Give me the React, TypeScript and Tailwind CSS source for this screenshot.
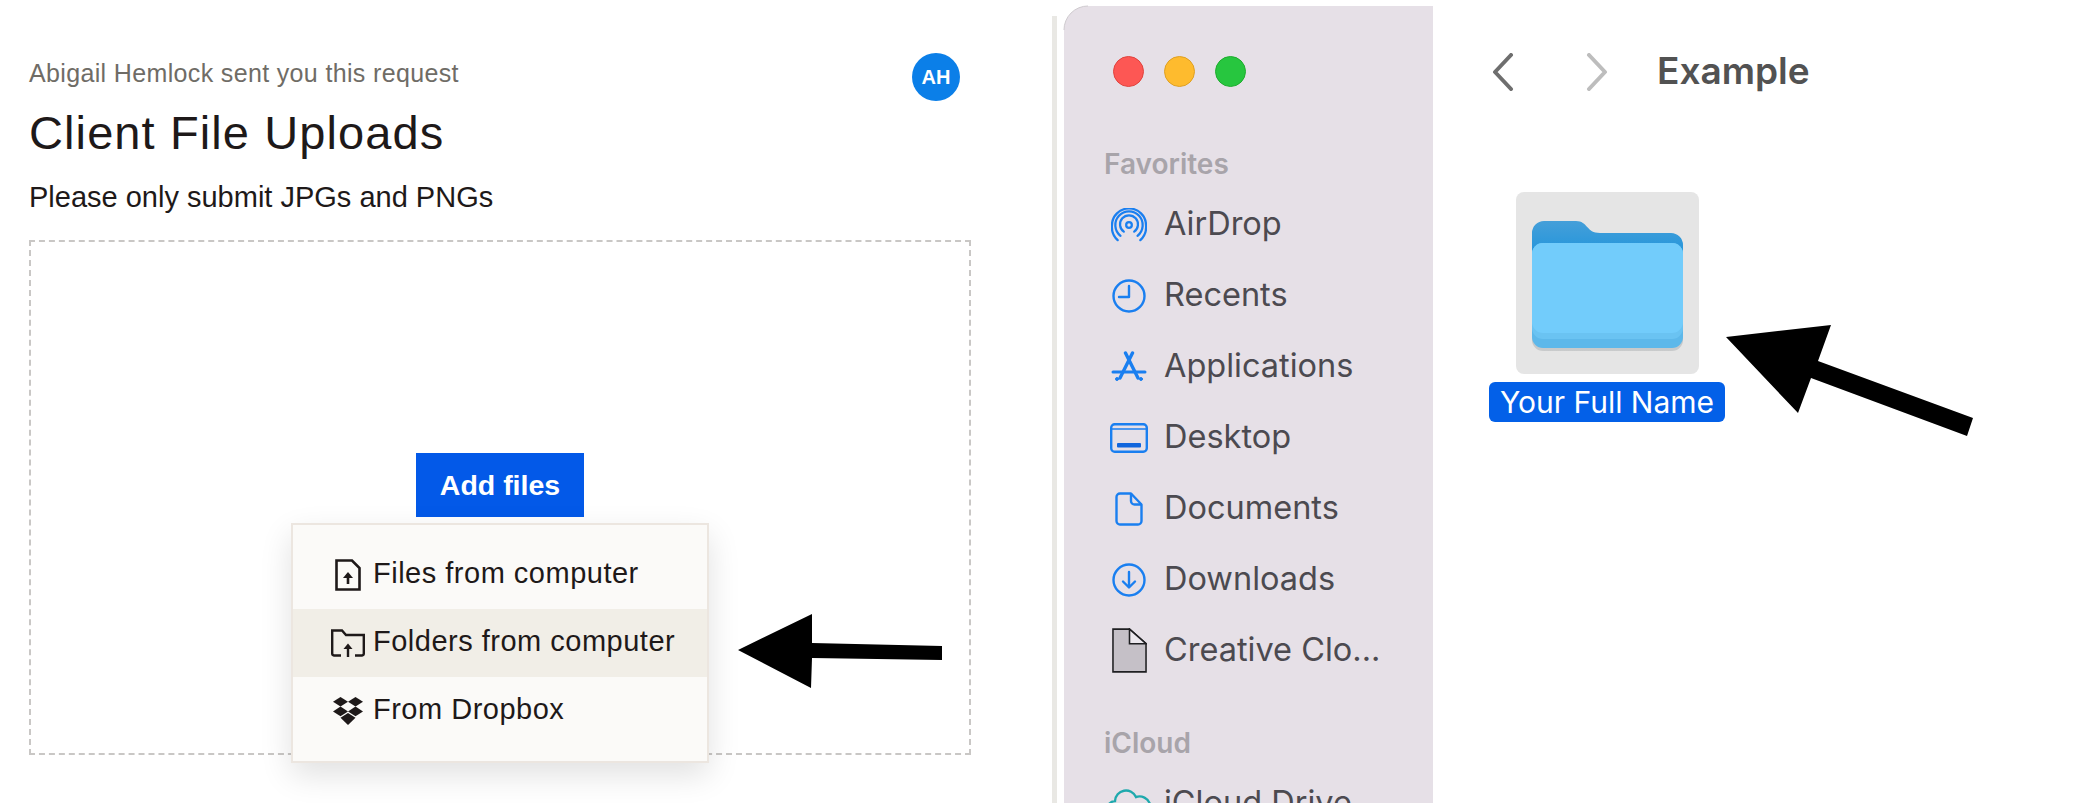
import React from 'react';

const sidebarFont = "font-['Inter',sans-serif]";

const AirDropIcon = () => (
  <svg width="36" height="34" viewBox="0 0 38 36" fill="none" stroke="#1a7ff0" strokeWidth="2.4" strokeLinecap="round">
    <circle cx="19" cy="18" r="3" />
    <path d="M13.5 25 A9.5 9.5 0 1 1 24.5 25" />
    <path d="M10 29.5 A14.5 14.5 0 1 1 28 29.5" />
    <path d="M7 34 A19 19 0 0 1 1 18 A18 17.5 0 0 1 37 18 A19 19 0 0 1 31 34" />
  </svg>
);

const ClockIcon = () => (
  <svg width="34" height="34" viewBox="0 0 34 34" fill="none" stroke="#1a7ff0" strokeWidth="2.4" strokeLinecap="round" strokeLinejoin="round">
    <circle cx="17" cy="17" r="15.5" />
    <path d="M17 7 V18 H7" />
  </svg>
);

const AppsIcon = () => (
  <svg width="36" height="32" viewBox="0 0 36 32" fill="none" stroke="#1a7ff0" strokeLinecap="round">
    <path d="M14.5 2 L27 27" strokeWidth="3.4" />
    <path d="M21.5 2 L9 27" strokeWidth="3.4" />
    <path d="M2 21 H34" strokeWidth="3" />
    <circle cx="6" cy="28" r="1.5" fill="#1a7ff0" />
    <circle cx="30" cy="28" r="1.5" fill="#1a7ff0" />
  </svg>
);

const DesktopIcon = () => (
  <svg width="38" height="30" viewBox="0 0 38 30" fill="none">
    <rect x="1.2" y="1.2" width="35.6" height="27.6" rx="3.5" stroke="#1a7ff0" strokeWidth="2.4" />
    <path d="M1.5 6 H36.5" stroke="#1a7ff0" strokeWidth="1.6" />
    <rect x="7" y="20" width="24" height="4.5" rx="1" fill="#1166dd" />
  </svg>
);

const DocumentIcon = () => (
  <svg width="28" height="34" viewBox="0 0 28 34" fill="none" stroke="#1a7ff0" strokeWidth="2.4" strokeLinejoin="round">
    <path d="M5 1.5 H16 L26.5 12.5 V29 A3.5 3.5 0 0 1 23 32.5 H5 A3.5 3.5 0 0 1 1.5 29 V5 A3.5 3.5 0 0 1 5 1.5 Z" />
    <path d="M16 1.5 V9 A3.5 3.5 0 0 0 19.5 12.5 H26.5" />
  </svg>
);

const DownloadIcon = () => (
  <svg width="34" height="34" viewBox="0 0 34 34" fill="none" stroke="#1a7ff0" strokeWidth="2.4" strokeLinecap="round" strokeLinejoin="round">
    <circle cx="17" cy="17" r="15.5" />
    <path d="M17 9 V24 M11 18.5 L17 24.5 L23 18.5" />
  </svg>
);

const GenericFileIcon = () => (
  <svg width="35" height="45" viewBox="0 0 36 46" stroke="#1f1f22" strokeWidth="1.6">
    <path d="M1 1 H18 L35 16 V45 H1 Z" fill="#c5c0c7" />
    <path d="M18 1 V16 H35 Z" fill="#ece8ee" />
  </svg>
);

const CloudIcon = () => (
  <svg width="46" height="34" viewBox="0 0 46 34" fill="none" stroke="#1fa9ad" strokeWidth="2.4">
    <path d="M10 31 A8.5 8.5 0 0 1 9 14 A11 11 0 0 1 30 10 A10.5 10.5 0 0 1 37 31 Z" />
  </svg>
);

const sidebarItems = [
  { label: 'AirDrop', icon: <AirDropIcon /> },
  { label: 'Recents', icon: <ClockIcon /> },
  { label: 'Applications', icon: <AppsIcon /> },
  { label: 'Desktop', icon: <DesktopIcon /> },
  { label: 'Documents', icon: <DocumentIcon /> },
  { label: 'Downloads', icon: <DownloadIcon /> },
  { label: 'Creative Clo...', icon: <GenericFileIcon /> },
];

const FileUpIcon = () => (
  <svg width="26" height="32" viewBox="0 0 26 32" fill="none">
    <path d="M1.5 1.5 H17 L24.5 9 V30.5 H1.5 Z" stroke="#1e1919" strokeWidth="2.6" />
    <path d="M13 25 V15" stroke="#1e1919" strokeWidth="2.6" />
    <path d="M8 19 L13 13 L18 19 Z" fill="#1e1919" />
  </svg>
);

const FolderUpIcon = () => (
  <svg width="34" height="28" viewBox="0 0 34 28" fill="none" stroke="#1e1919" strokeWidth="2.4">
    <path d="M10 26.5 H3 A2 2 0 0 1 1.2 24.5 V1.5 H11 L15 6 H32.8 V24.5 A2 2 0 0 1 31 26.5 H24" />
    <path d="M17 28 V17" />
    <path d="M12.5 20 L17 14.5 L21.5 20 Z" fill="#1e1919" stroke="none" />
  </svg>
);

const DropboxIcon = () => (
  <svg width="32" height="28" viewBox="0 0 32 28" fill="#1e1919">
    <path d="M8.5 0 L16 4.8 L8.5 9.6 L1 4.8 Z" />
    <path d="M23.5 0 L31 4.8 L23.5 9.6 L16 4.8 Z" />
    <path d="M8.5 9.6 L16 14.4 L8.5 19.2 L1 14.4 Z" />
    <path d="M23.5 9.6 L31 14.4 L23.5 19.2 L16 14.4 Z" />
    <path d="M16 16 L23.5 20.8 L16 28 L8.5 20.8 Z" />
  </svg>
);

const menuItems = [
  { label: 'Files from computer', icon: <FileUpIcon />, active: false },
  { label: 'Folders from computer', icon: <FolderUpIcon />, active: true },
  { label: 'From Dropbox', icon: <DropboxIcon />, active: false },
];

const FolderGraphic = () => (
  <svg width="151" height="130" viewBox="0 0 151 130">
    <defs>
      <linearGradient id="folderBack" x1="0" y1="0" x2="0" y2="1">
        <stop offset="0" stopColor="#459fd9" />
        <stop offset="1" stopColor="#1190dc" />
      </linearGradient>
      <linearGradient id="folderShade" x1="0" y1="0" x2="0" y2="1">
        <stop offset="0" stopColor="#9a9fa3" />
        <stop offset="1" stopColor="#c9cbcc" />
      </linearGradient>
    </defs>
    <path d="M0 12 A12 12 0 0 1 12 0 H44 C56 0 54 12 68 12 H139 A12 12 0 0 1 151 24 V50 H0 Z" fill="url(#folderBack)" />
    <rect x="0" y="30" width="151" height="100" rx="11" fill="url(#folderShade)" />
    <rect x="0" y="22" width="151" height="105" rx="11" fill="#5db8ea" />
    <rect x="0" y="22" width="151" height="96" rx="11" fill="#6ac3f2" />
    <rect x="0" y="22" width="151" height="90" rx="11" fill="#72ccfb" />
  </svg>
);

export default function App() {
  return (
    <div className="flex w-[2079px] h-[803px] overflow-hidden bg-white">
      {/* Upload request */}
      <div className="w-[1052px] shrink-0 pl-[29px] font-['Liberation_Sans',sans-serif]">
        <div className="flex justify-between items-start w-[931px] pt-[53px]">
          <p className="pt-1 text-[25px] leading-8 tracking-[0.35px] text-[#6f6c66]">Abigail Hemlock sent you this request</p>
          <div className="w-12 h-12 rounded-full bg-[#0b7fe8] flex items-center justify-center text-white text-[20px] font-bold">AH</div>
        </div>
        <h1 className="mt-[6px] text-[47px] leading-[52px] tracking-[1.1px] text-[#1e1919]">Client File Uploads</h1>
        <p className="mt-[20px] text-[29px] leading-9 text-[#1e1919]">Please only submit JPGs and PNGs</p>
        <div className="relative mt-[25px] w-[942px] h-[515px] border-2 border-dashed border-[#c9c7c5] flex flex-col items-center pt-[211px]">
          <button className="w-[168px] h-16 bg-[#0359e8] text-white text-[28.5px] font-bold">Add files</button>
          <div className="absolute left-[260px] top-[281px] w-[418px] h-[240px] pt-4 bg-[#fbfaf8] border-2 border-[#ece6e0] shadow-[0_12px_30px_rgba(0,0,0,0.12)]">
            {menuItems.map((item) => (
              <div key={item.label} className={`flex items-center h-[68px] ${item.active ? 'bg-[#f1eee7]' : ''}`}>
                <div className="w-[80px] pl-[29px] flex justify-center shrink-0">{item.icon}</div>
                <span className="-mt-0.5 text-[29px] tracking-[0.5px] text-[#1e1919]">{item.label}</span>
              </div>
            ))}
          </div>
        </div>
      </div>

      <div className="w-[5px] shrink-0 mt-4 bg-[#e9e8e4]" />

      {/* Finder sidebar */}
      <div className={`ml-[7px] w-[369px] shrink-0 mt-[6px] rounded-tl-[24px] bg-[#e6e0e7] overflow-hidden ${sidebarFont}`}>
        <div className="flex gap-5 pl-[49px] pt-[50px]">
          <div className="w-[31px] h-[31px] rounded-full bg-[#fd5754] border border-[#e0443e]" />
          <div className="w-[31px] h-[31px] rounded-full bg-[#febb2e] border border-[#dfa023]" />
          <div className="w-[31px] h-[31px] rounded-full bg-[#27c63f] border border-[#1fad2f]" />
        </div>
        <p className="mt-[61px] pl-10 text-[28px] leading-8 font-semibold text-[#a8a4aa]">Favorites</p>
        <div className="mt-[9px]">
          {sidebarItems.map((item) => (
            <div key={item.label} className="flex items-center h-[71px] pl-10">
              <div className="w-[50px] flex justify-center shrink-0">{item.icon}</div>
              <span className="ml-[10px] text-[32.5px] text-[#4c4a50]">{item.label}</span>
            </div>
          ))}
        </div>
        <p className="mt-[41px] pl-10 text-[28px] leading-8 font-semibold text-[#a8a4aa]">iCloud</p>
        <div className="flex items-center h-[71px] pl-10 mt-[9px]">
          <div className="w-[50px] flex justify-center shrink-0"><CloudIcon /></div>
          <span className="ml-[10px] text-[32.5px] text-[#4c4a50]">iCloud Drive</span>
        </div>
      </div>

      {/* Finder content */}
      <div className={`flex-1 ${sidebarFont}`}>
        <div className="flex items-center pl-[59px] pt-[50px] h-[94px]">
          <svg width="22" height="38" viewBox="0 0 22 38" fill="none" stroke="#6e6e6e" strokeWidth="4" strokeLinecap="round" strokeLinejoin="round">
            <path d="M19 2 L3 19 L19 36" />
          </svg>
          <svg className="ml-[72px]" width="22" height="38" viewBox="0 0 22 38" fill="none" stroke="#bdbdbd" strokeWidth="4" strokeLinecap="round" strokeLinejoin="round">
            <path d="M3 2 L19 19 L3 36" />
          </svg>
          <span className="-mt-0.5 ml-[49px] text-[37px] font-semibold text-[#525252]">Example</span>
        </div>
        <div className="ml-[56px] mt-[98px] w-[236px] flex flex-col items-center">
          <div className="ml-[1px] w-[183px] h-[182px] rounded-lg bg-[#e5e5e5] flex items-start justify-center pt-[29px]">
            <FolderGraphic />
          </div>
          <div className="mt-2 w-[236px] h-10 rounded-md bg-[#0360e8] flex items-center justify-center text-white text-[30px]">Your Full Name</div>
        </div>
      </div>

      {/* Annotation arrows */}
      <svg className="absolute left-0 top-0 pointer-events-none" width="2079" height="803" viewBox="0 0 2079 803" fill="#000">
        <path d="M738 650 L812 614 L812 643 L942 646 L942 660 L812 658 L811 688 Z" />
        <path d="M1726 337 L1831 325 L1818 361 L1973 418 L1967 436 L1811 378 L1798 413 Z" />
        <path d="M1064 30 A24 24 0 0 1 1088 6" fill="none" stroke="#cfcbcf" strokeWidth="1" />
      </svg>
    </div>
  );
}
